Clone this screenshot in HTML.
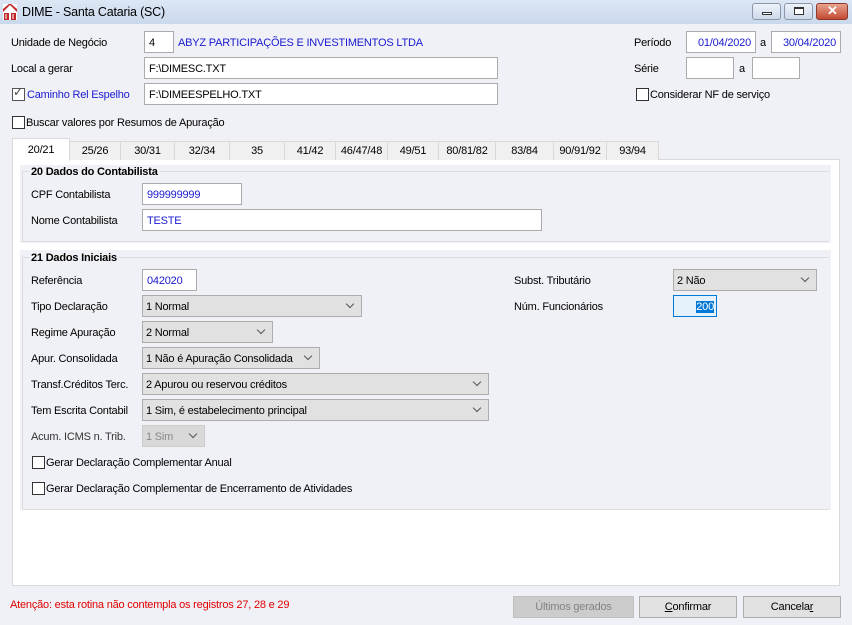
<!DOCTYPE html>
<html><head><meta charset="utf-8"><style>
*{box-sizing:border-box;margin:0;padding:0}
body{width:852px;height:625px;background:#f0f1f6;font-family:"Liberation Sans",sans-serif;font-size:11px;letter-spacing:-0.2px;color:#000;position:relative;overflow:hidden}
.a{position:absolute;white-space:nowrap}
.t{margin-top:1px}
.tb{position:absolute;left:0;top:0;width:852px;height:24px;background:linear-gradient(#dde7f5,#c9d8ec);}
.inp{position:absolute;background:#fff;border:1px solid #ababab;color:#1a1ad0;padding:1px 4px 0;line-height:20px;height:22px;white-space:nowrap}
.cb{position:absolute;width:13px;height:13px;border:1px solid #333;background:#fff}
.sel{position:absolute;background:#e1e1e1;border:1px solid #adadad;height:22px;line-height:20px;padding:1px 0 0 3px;white-space:nowrap}
.sel:after{content:"";position:absolute;right:8px;top:5px;width:5px;height:5px;border-right:1px solid #555;border-bottom:1px solid #555;transform:rotate(45deg)}
.tab{position:absolute;top:141px;height:19px;background:#f0f0f0;border:1px solid #d9d9d9;border-bottom:none;text-align:center;line-height:19px}
.grp{position:absolute;left:20px;width:811px;background:#f0f1f6}
.gl{position:absolute;left:22px;right:23px;border:1px solid #dcdcdc;border-right:none}
.btn{position:absolute;top:596px;height:22px;border:1px solid #adadad;background:#e1e1e1;text-align:center;line-height:21px}
.wb{position:absolute;top:3px;height:17px;border:1px solid #8a97aa;border-radius:3px;background:linear-gradient(#eef3fa,#cdd9e8)}
</style></head><body>
<div class="tb"></div>
<svg class="a" style="left:3px;top:4px" width="14" height="16" viewBox="0 0 14 16"><rect width="14" height="16" fill="#fff"/><path d="M0 8 L7 1 L14 8 L14 5 L7 -1 L0 5Z" fill="#c0282a"/><rect x="1" y="9" width="5" height="7" fill="#c0282a"/><rect x="8" y="9" width="5" height="7" fill="#c0282a"/><path d="M3 10v5M10 10v5" stroke="#fff" stroke-width="1"/></svg>
<div class="a" style="left:22px;top:5px;font-size:12.5px;letter-spacing:-0.2px">DIME - Santa Cataria (SC)</div>
<div class="wb" style="left:752px;width:29px"><div class="a" style="left:9px;top:8px;width:10px;height:3px;border:1px solid #333;background:#fff"></div></div>
<div class="wb" style="left:784px;width:29px"><div class="a" style="left:9px;top:3px;width:10px;height:8px;border:1px solid #333;border-top-width:2px;background:#fff"></div></div>
<div class="wb" style="left:816px;width:32px;background:linear-gradient(#e8a390,#c34a30);border-color:#8a3a2a"><div class="a" style="left:10px;top:-1px;color:#fff;font-weight:bold;font-size:13px">✕</div></div>

<div class="a t" style="left:11px;top:36px">Unidade de Negócio</div>
<div class="inp" style="left:144px;top:31px;width:30px;color:#000">4</div>
<div class="a t" style="left:178px;top:36px;color:#1a1ad0">ABYZ PARTICIPAÇÕES E INVESTIMENTOS LTDA</div>
<div class="a t" style="left:11px;top:62px">Local a gerar</div>
<div class="inp" style="left:144px;top:57px;width:354px;color:#000">F:\DIMESC.TXT</div>
<div class="cb" style="left:12px;top:88px;border-color:#555"></div>
<div class="a" style="left:13px;top:85px;font-size:12px;color:#444">✓</div>
<div class="a t" style="left:27px;top:88px;color:#1a1ad0">Caminho Rel Espelho</div>
<div class="inp" style="left:144px;top:83px;width:354px;color:#000">F:\DIMEESPELHO.TXT</div>
<div class="cb" style="left:12px;top:116px"></div>
<div class="a t" style="left:26px;top:116px">Buscar valores por Resumos de Apuração</div>

<div class="a t" style="left:634px;top:36px">Período</div>
<div class="inp" style="left:686px;top:31px;width:70px;text-align:right">01/04/2020</div>
<div class="a t" style="left:760px;top:36px">a</div>
<div class="inp" style="left:771px;top:31px;width:70px;text-align:right">30/04/2020</div>
<div class="a t" style="left:634px;top:62px">Série</div>
<div class="inp" style="left:686px;top:57px;width:48px"></div>
<div class="a t" style="left:739px;top:62px">a</div>
<div class="inp" style="left:752px;top:57px;width:48px"></div>
<div class="cb" style="left:636px;top:88px"></div>
<div class="a t" style="left:650px;top:88px">Considerar NF de serviço</div>

<div class="a" style="left:12px;top:159px;width:828px;height:427px;background:#fff;border:1px solid #d9d9d9"></div>
<div class="tab" style="left:69px;width:52px">25/26</div>
<div class="tab" style="left:120px;width:55px">30/31</div>
<div class="tab" style="left:174px;width:56px">32/34</div>
<div class="tab" style="left:229px;width:56px">35</div>
<div class="tab" style="left:284px;width:52px">41/42</div>
<div class="tab" style="left:335px;width:53px">46/47/48</div>
<div class="tab" style="left:387px;width:52px">49/51</div>
<div class="tab" style="left:438px;width:58px">80/81/82</div>
<div class="tab" style="left:495px;width:59px">83/84</div>
<div class="tab" style="left:553px;width:54px">90/91/92</div>
<div class="tab" style="left:606px;width:53px">93/94</div>
<div class="tab" style="left:12px;width:58px;top:138px;height:23px;background:#fff;line-height:22px">20/21</div>

<div class="grp" style="top:165px;height:78px"></div>
<div class="gl" style="top:171px;height:71px"></div>
<div class="a t" style="left:29px;top:165px;font-weight:bold;background:#f0f1f6;padding:0 2px">20 Dados do Contabilista</div>
<div class="a t" style="left:31px;top:188px">CPF Contabilista</div>
<div class="inp" style="left:142px;top:183px;width:100px">999999999</div>
<div class="a t" style="left:31px;top:214px">Nome Contabilista</div>
<div class="inp" style="left:142px;top:209px;width:400px">TESTE</div>

<div class="grp" style="top:250px;height:260px"></div>
<div class="gl" style="top:257px;height:253px"></div>
<div class="a t" style="left:29px;top:251px;font-weight:bold;background:#f0f1f6;padding:0 2px">21 Dados Iniciais</div>
<div class="a t" style="left:31px;top:274px">Referência</div>
<div class="inp" style="left:142px;top:269px;width:55px">042020</div>
<div class="a t" style="left:31px;top:300px">Tipo Declaração</div>
<div class="sel" style="left:142px;top:295px;width:220px">1 Normal</div>
<div class="a t" style="left:31px;top:326px">Regime Apuração</div>
<div class="sel" style="left:142px;top:321px;width:131px">2 Normal</div>
<div class="a t" style="left:31px;top:352px">Apur. Consolidada</div>
<div class="sel" style="left:142px;top:347px;width:178px">1 Não é Apuração Consolidada</div>
<div class="a t" style="left:31px;top:378px">Transf.Créditos Terc.</div>
<div class="sel" style="left:142px;top:373px;width:347px">2 Apurou ou reservou créditos</div>
<div class="a t" style="left:31px;top:404px">Tem Escrita Contabil</div>
<div class="sel" style="left:142px;top:399px;width:347px">1 Sim, é estabelecimento principal</div>
<div class="a t" style="left:31px;top:430px;color:#333">Acum. ICMS n. Trib.</div>
<div class="sel" style="left:142px;top:425px;width:63px;background:#d9d9d9;border-color:#ccc;color:#888">1 Sim</div>
<div class="cb" style="left:32px;top:456px"></div>
<div class="a t" style="left:46px;top:456px">Gerar Declaração Complementar Anual</div>
<div class="cb" style="left:32px;top:482px"></div>
<div class="a t" style="left:46px;top:482px">Gerar Declaração Complementar de Encerramento de Atividades</div>
<div class="a t" style="left:514px;top:274px">Subst. Tributário</div>
<div class="sel" style="left:673px;top:269px;width:144px">2 Não</div>
<div class="a t" style="left:514px;top:300px">Núm. Funcionários</div>
<div class="inp" style="left:673px;top:295px;width:44px;border-color:#0078d7;background:#e5f1fb;color:#000;text-align:right;padding-right:2px"><span style="background:#0078d7;color:#fff">200</span></div>

<div class="a t" style="left:10px;top:598px;color:#e00000">Atenção: esta rotina não contempla os registros 27, 28 e 29</div>
<div class="btn" style="left:513px;width:121px;background:#cccccc;border-color:#bfbfbf;color:#838383">Últimos gerados</div>
<div class="btn" style="left:639px;width:98px"><u>C</u>onfirmar</div>
<div class="btn" style="left:743px;width:98px">Cancela<u>r</u></div>
</body></html>
